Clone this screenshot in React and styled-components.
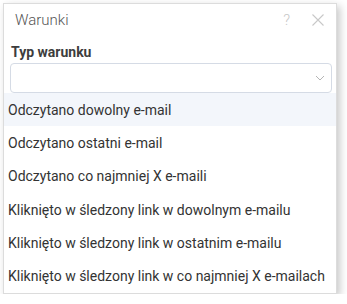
import styled, { createGlobalStyle } from 'styled-components'

const Global = createGlobalStyle`
  body {
    margin: 0;
    background: #fff;
    font-family: Roboto, "Liberation Sans", sans-serif;
  }
`

const Panel = styled.div`
  margin: 3px 0 0 3px;
  width: 332px;
  border: 1px solid #dcdcdc;
  background: #fff;
  box-shadow: 3px 3px 8px rgba(0, 0, 0, 0.22);
`

const Header = styled.div`
  display: flex;
  align-items: center;
  height: 32px;
  padding: 0 12px 0 11px;
  font-size: 15px;
  color: #555;
`

const Title = styled.div`
  flex: 1;
  font-weight: 300;
`

const HeadIcon = styled.span`
  color: #c8c8c8;
  margin-left: ${p => p.$gap || 0}px;
  display: flex;
  align-items: center;
  font-size: 15px;
  font-weight: 300;
`

const Field = styled.div`
  padding: 8px 4px 0 6px;
`

const Label = styled.div`
  font-size: 14px;
  font-weight: 700;
  color: #3d3d3d;
  line-height: 16px;
  margin-left: 1px;
`

const Select = styled.div`
  margin-top: 3px;
  height: 28px;
  border: 1px solid #d5dbe5;
  border-radius: 4px;
  display: flex;
  align-items: center;
  justify-content: flex-end;
  padding-right: 6px;
`

const List = styled.div`
  margin-top: 0;
`

const Item = styled.div`
  height: 33.3px;
  display: flex;
  align-items: center;
  padding-left: 4px;
  font-size: 14px;
  color: #333;
  white-space: nowrap;
  background: ${p => (p.$active ? '#f3f6fb' : '#fff')};
`

const options = [
  'Odczytano dowolny e-mail',
  'Odczytano ostatni e-mail',
  'Odczytano co najmniej X e-maili',
  'Kliknięto w śledzony link w dowolnym e-mailu',
  'Kliknięto w śledzony link w ostatnim e-mailu',
  'Kliknięto w śledzony link w co najmniej X e-mailach',
]

export default function App() {
  return (
    <>
      <Global />
      <Panel>
        <Header>
          <Title>Warunki</Title>
          <HeadIcon>?</HeadIcon>
          <HeadIcon $gap={22}>
            <svg width="12" height="12" viewBox="0 0 12 12">
              <path d="M0.5 0.5L11.5 11.5M11.5 0.5L0.5 11.5" stroke="#c8c8c8" strokeWidth="1.1" fill="none" />
            </svg>
          </HeadIcon>
        </Header>
        <Field>
          <Label>Typ warunku</Label>
          <Select>
            <svg width="10" height="6" viewBox="0 0 10 6">
              <path d="M1 1L5 5L9 1" stroke="#b5b5b5" strokeWidth="1" fill="none" />
            </svg>
          </Select>
        </Field>
        <List>
          {options.map((o, i) => (
            <Item key={o} $active={i === 0}>{o}</Item>
          ))}
        </List>
      </Panel>
    </>
  )
}
